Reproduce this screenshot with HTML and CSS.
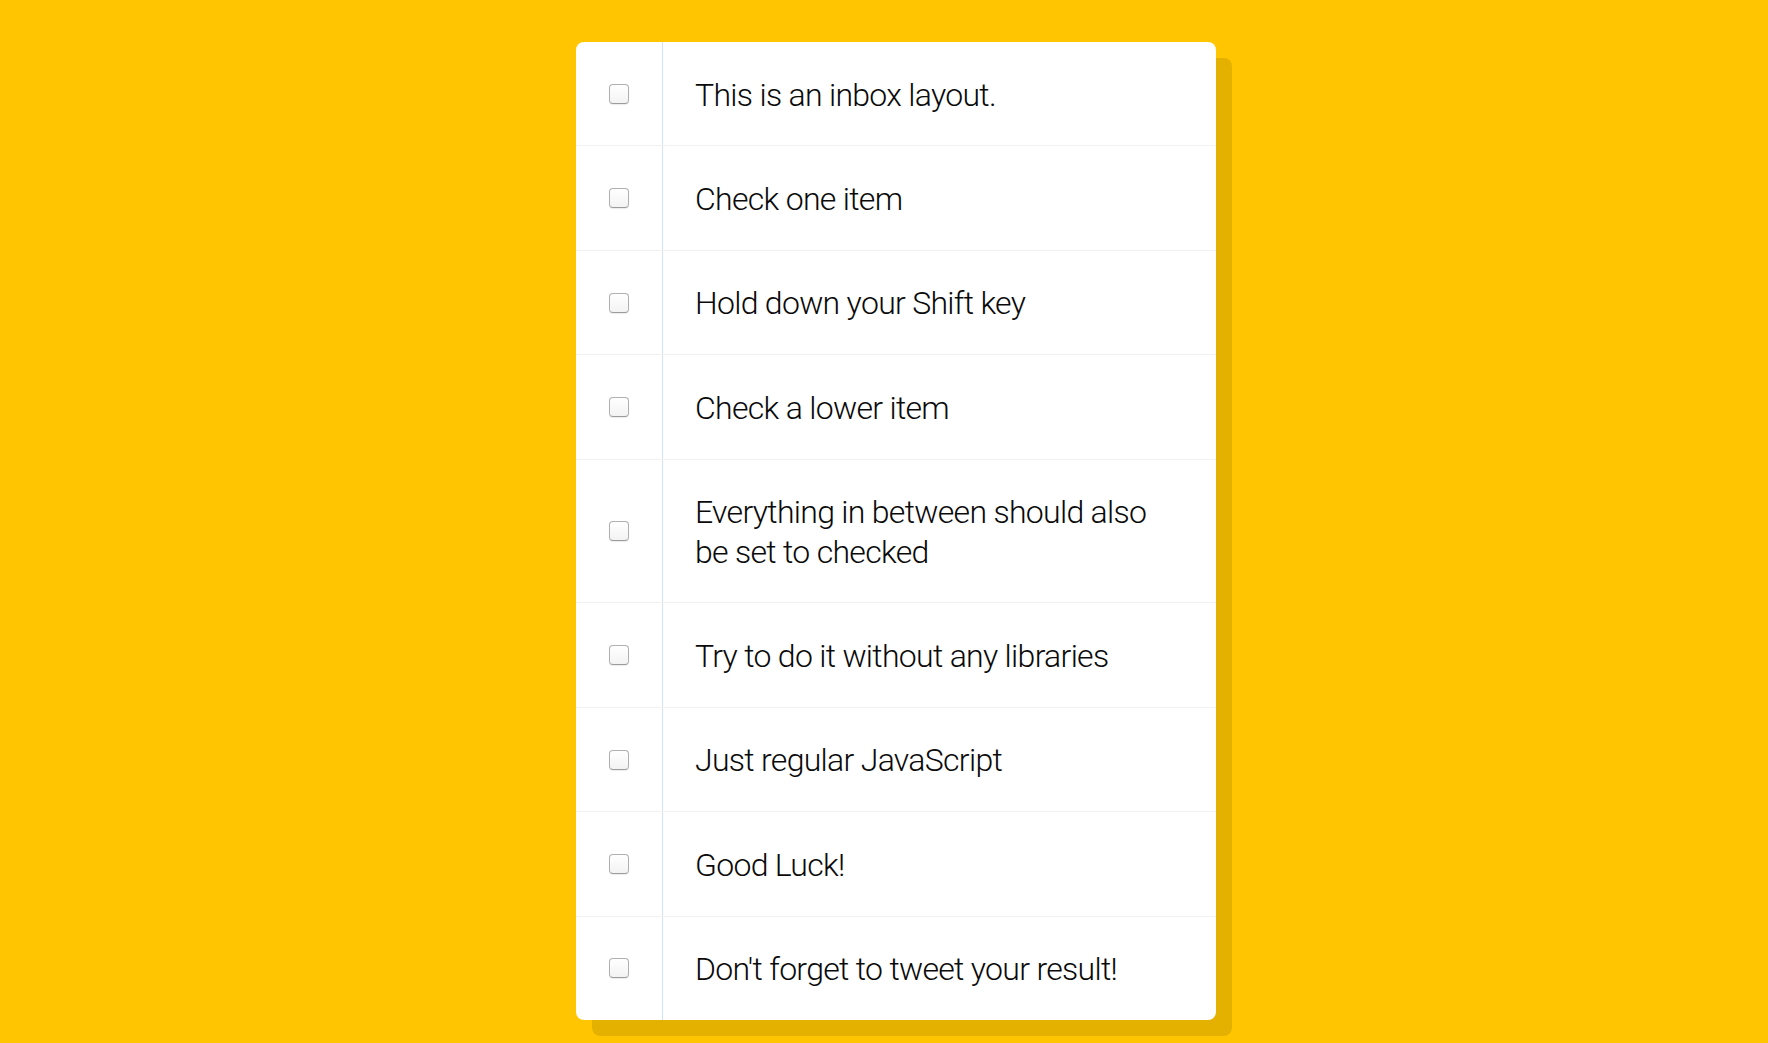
FILE: index.html
```html
<!DOCTYPE html>
<html>
<head>
<meta charset="utf-8">
<title>Hold Shift to Check Multiple Checkboxes</title>
<link rel="stylesheet" href="styles.css">
</head>
<body>
<div class="inbox">
  <div class="item"><input type="checkbox"><p>This is an inbox layout.</p></div>
  <div class="item"><input type="checkbox"><p>Check one item</p></div>
  <div class="item"><input type="checkbox"><p>Hold down your Shift key</p></div>
  <div class="item"><input type="checkbox"><p>Check a lower item</p></div>
  <div class="item"><input type="checkbox"><p>Everything in between should also be set to checked</p></div>
  <div class="item"><input type="checkbox"><p>Try to do it without any libraries</p></div>
  <div class="item"><input type="checkbox"><p>Just regular JavaScript</p></div>
  <div class="item"><input type="checkbox"><p>Good Luck!</p></div>
  <div class="item"><input type="checkbox"><p>Don't forget to tweet your result!</p></div>
</div>
</body>
</html>
```
FILE: styles.css
```css
html {
  background: #ffc600;
  font-family: "Liberation Sans", sans-serif;
}

body {
  margin: 0;
  padding: 42px 0 23px 24px;
}

.inbox {
  width: 640px;
  margin: 0 auto;
  background: #fff;
  border-radius: 8px;
  box-shadow: 16px 16px 0 rgba(0, 0, 0, 0.1);
}

.item {
  display: flex;
  align-items: center;
  border-bottom: 1px solid #f1f1f1;
}

.item:last-child {
  border-bottom: 0;
}

.item input[type="checkbox"] {
  -webkit-appearance: none;
  appearance: none;
  width: 20px;
  height: 20px;
  margin: 0 33px;
  border: 1px solid #b0b0b0;
  border-bottom-color: #9c9c9c;
  border-radius: 4px;
  background: linear-gradient(#ffffff, #f3f3f3);
  box-shadow: 0 1px 1px rgba(0, 0, 0, 0.08);
  flex: none;
}

.item p {
  margin: 0;
  padding: 33.5px 32px 30.5px;
  flex: 1;
  font-family: Roboto, "Liberation Sans", sans-serif;
  font-size: 32px;
  font-weight: 300;
  letter-spacing: -0.7px;
  line-height: 39.4px;
  color: #0a0a0a;
  border-left: 1px solid #d1e2ff;
}
```
